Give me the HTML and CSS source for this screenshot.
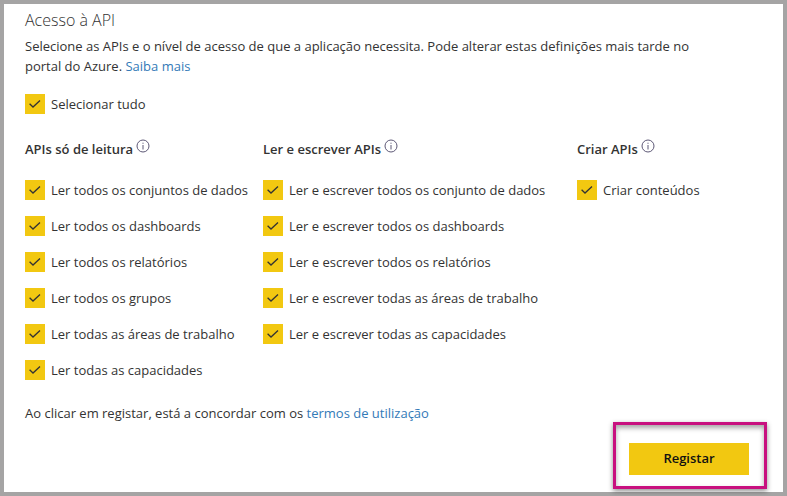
FILE: index.html
```
<!DOCTYPE html>
<html lang="pt">
<head>
<meta charset="utf-8">
<title>Acesso à API</title>
<link rel="stylesheet" href="styles.css">
</head>
<body>
<svg class="defs" aria-hidden="true">
  <symbol id="tick" viewBox="0 0 20 20"><path d="M4.6 9.8 8 13 15 6.5"/></symbol>
  <symbol id="info" viewBox="0 0 14 14"><circle cx="7" cy="7" r="6"/><path d="M7 6V10.5M7 3.7V4.8"/></symbol>
</svg>
<main class="panel">
  <h1 class="title">Acesso à API</h1>
  <p class="intro">Selecione as APIs e o nível de acesso de que a aplicação necessita. Pode alterar estas definições mais tarde no portal do Azure. <a href="#saiba">Saiba mais</a></p>
  <label class="check"><span class="box"><input type="checkbox" checked><svg><use href="#tick"/></svg></span>Selecionar tudo</label>
  <div class="groups">
    <section class="group">
      <h2>APIs só de leitura<svg class="info"><use href="#info"/></svg></h2>
      <label class="check"><span class="box"><input type="checkbox" checked><svg><use href="#tick"/></svg></span>Ler todos os conjuntos de dados</label>
      <label class="check"><span class="box"><input type="checkbox" checked><svg><use href="#tick"/></svg></span>Ler todos os dashboards</label>
      <label class="check"><span class="box"><input type="checkbox" checked><svg><use href="#tick"/></svg></span>Ler todos os relatórios</label>
      <label class="check"><span class="box"><input type="checkbox" checked><svg><use href="#tick"/></svg></span>Ler todos os grupos</label>
      <label class="check"><span class="box"><input type="checkbox" checked><svg><use href="#tick"/></svg></span>Ler todas as áreas de trabalho</label>
      <label class="check"><span class="box"><input type="checkbox" checked><svg><use href="#tick"/></svg></span>Ler todas as capacidades</label>
    </section>
    <section class="group">
      <h2>Ler e escrever APIs<svg class="info"><use href="#info"/></svg></h2>
      <label class="check"><span class="box"><input type="checkbox" checked><svg><use href="#tick"/></svg></span>Ler e escrever todos os conjunto de dados</label>
      <label class="check"><span class="box"><input type="checkbox" checked><svg><use href="#tick"/></svg></span>Ler e escrever todos os dashboards</label>
      <label class="check"><span class="box"><input type="checkbox" checked><svg><use href="#tick"/></svg></span>Ler e escrever todos os relatórios</label>
      <label class="check"><span class="box"><input type="checkbox" checked><svg><use href="#tick"/></svg></span>Ler e escrever todas as áreas de trabalho</label>
      <label class="check"><span class="box"><input type="checkbox" checked><svg><use href="#tick"/></svg></span>Ler e escrever todas as capacidades</label>
    </section>
    <section class="group">
      <h2>Criar APIs<svg class="info"><use href="#info"/></svg></h2>
      <label class="check"><span class="box"><input type="checkbox" checked><svg><use href="#tick"/></svg></span>Criar conteúdos</label>
    </section>
  </div>
  <p class="terms">Ao clicar em registar, está a concordar com os <a href="#termos">termos de utilização</a></p>
  <div class="highlight"><button class="register" type="button">Registar</button></div>
</main>
</body>
</html>
```
FILE: styles.css
```
* {
  box-sizing: border-box;
}

body {
  margin: 0;
  background: #fff;
  color: #333;
  font: 13px/20px "Segoe UI", "Open Sans", "Noto Sans", sans-serif;
}

.defs {
  display: none;
}

.panel {
  display: flex;
  flex-direction: column;
  align-items: flex-start;
  min-height: 100vh;
  padding: 4px 34px 3px 21px;
  border: 4px solid #a5a4a4;
}

h1,
h2,
p {
  margin: 0;
}

.title {
  font-size: 16px;
  line-height: 24px;
  font-weight: 300;
}

.intro {
  max-width: 700px;
  margin: 4px 0 18px;
}

a {
  color: #337ab7;
  text-decoration: none;
}

.check {
  display: flex;
  align-items: center;
  gap: 6px;
  white-space: nowrap;
}

.box {
  position: relative;
  flex: none;
  width: 20px;
  height: 20px;
}

.box input {
  appearance: none;
  display: block;
  width: 20px;
  height: 20px;
  margin: 0;
  background: #f2c811;
}

.box svg {
  position: absolute;
  inset: 0;
  width: 20px;
  height: 20px;
  pointer-events: none;
  fill: none;
  stroke: #333;
  stroke-width: 1.3;
}

.groups {
  display: grid;
  grid-template-columns: 238fr 314fr 172fr;
  align-self: stretch;
  margin: 25px 0 23px;
}

.group {
  display: flex;
  flex-direction: column;
  align-items: flex-start;
  gap: 16px;
}

.group h2 {
  display: flex;
  gap: 3px;
  margin-bottom: 5px;
  font-size: 13px;
  line-height: 20px;
  font-weight: 600;
}

.info {
  width: 14px;
  height: 14px;
  fill: none;
  stroke: #5d5876;
  stroke-width: 1;
}

.highlight {
  margin: -1px -18px 0 auto;
  padding: 18px 15px 11px 13px;
  border: 3px solid #c8107f;
  box-shadow: 0 2px 5px rgba(0, 0, 0, 0.45), inset 0 3px 5px rgba(0, 0, 0, 0.35);
}

.register {
  display: block;
  width: 120px;
  height: 32px;
  padding: 0 0 2px;
  border: 0;
  background: #f2c811;
  color: #111;
  font: 600 13px/20px "Segoe UI", "Open Sans", "Noto Sans", sans-serif;
}
```
